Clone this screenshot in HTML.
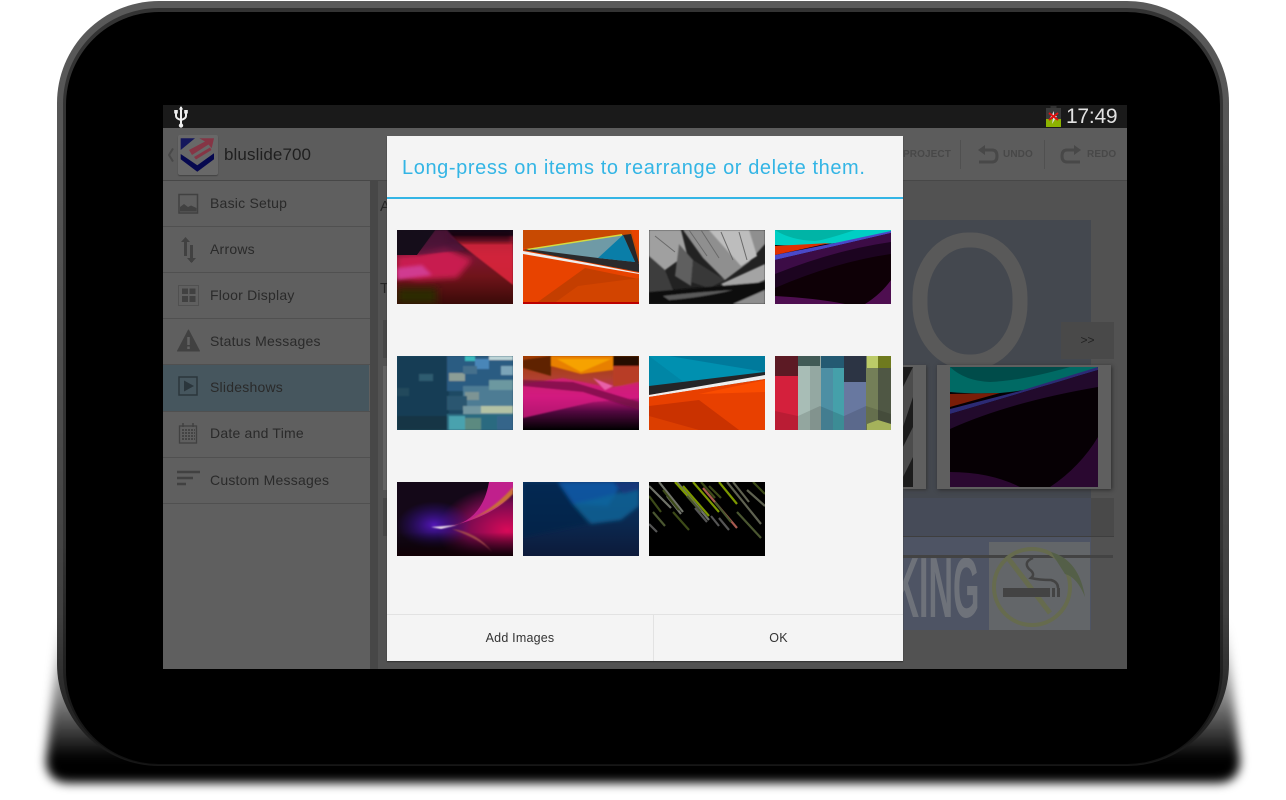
<!DOCTYPE html>
<html><head><meta charset="utf-8"><style>
html,body{margin:0;padding:0;background:#fff;width:1286px;height:800px;overflow:hidden;font-family:"Liberation Sans",sans-serif}
.a{position:absolute}
.m{position:absolute;left:210px;font-size:14px;letter-spacing:.22px;color:#2a2a2a;line-height:18px;white-space:nowrap}
.s{position:absolute;left:163px;width:207px;height:1px;background:#505050}
.ab{position:absolute;font-size:10px;font-weight:bold;color:#484848;line-height:12px;letter-spacing:.1px;white-space:nowrap}
.t{position:absolute;width:116px;height:74px;display:block;filter:blur(.35px)}
</style></head><body>
<svg class="a" style="left:0;top:0" width="1286" height="800"><defs><linearGradient id="sh" x1="0" y1="0" x2="0" y2="1"><stop offset="0" stop-color="#000" stop-opacity="0"/><stop offset=".5" stop-color="#000" stop-opacity=".5"/><stop offset=".85" stop-color="#000" stop-opacity="1"/><stop offset="1" stop-color="#000"/></linearGradient><filter id="b5" x="-5%" y="-20%" width="110%" height="140%"><feGaussianBlur stdDeviation="5"/></filter></defs><path d="M60 620 46 760Q46 783 70 783H1216Q1240 783 1240 760L1226 620Z" fill="url(#sh)" filter="url(#b5)"/></svg>
<div class="a" style="left:57px;top:1px;width:1172px;height:765px;border-radius:102px;background:linear-gradient(#5a5a5a 0,#505050 40%,#404040 80%,#161616 100%)"></div>
<div class="a" style="left:63px;top:8px;width:1160px;height:757px;border-radius:96px;background:linear-gradient(#333 0,#333 70%,#111 100%)"></div>
<div class="a" style="left:66px;top:12px;width:1154px;height:752px;border-radius:93px;background:#000"></div>

<div class="a" style="left:163px;top:105px;width:964px;height:23px;background:#1a1a1a"></div>
<div class="a" style="left:163px;top:128px;width:964px;height:53px;background:#5c5c5c;border-bottom:1px solid #474747;box-sizing:border-box"></div>
<div class="a" style="left:163px;top:181px;width:207px;height:488px;background:#5f5f5f"></div>
<div class="a" style="left:370px;top:181px;width:8px;height:488px;background:#474747"></div>
<div class="a" style="left:378px;top:181px;width:749px;height:488px;background:#525252"></div>

<!-- status -->
<svg class="a" style="left:174px;top:106px" width="14" height="22" viewBox="0 0 14 22" fill="none" stroke="#eee" stroke-width="2"><path d="M7 1V20"/><path d="M7 0 4.800 3.500H9.200Z" fill="#eee" stroke="none"/><path d="M2 6V10Q2 12.500 7 14Q12 12.500 12 10V6"/><rect x="0.200" y="4" width="3.600" height="3.500" fill="#eee" stroke="none"/><rect x="10.200" y="4" width="3.600" height="3.500" fill="#eee" stroke="none"/><circle cx="7" cy="19.500" r="2.200" fill="#eee" stroke="none"/></svg>
<svg class="a" style="left:1046px;top:106px" width="15" height="21" viewBox="0 0 15 21"><rect x="4.500" y="0" width="6" height="3" fill="#333"/><rect x="0" y="2" width="15" height="19" fill="#3a3a3a"/><rect x="0" y="13" width="15" height="8" fill="#8db300"/><path d="M8 5 4 12H7L6 18 11 10H8Z" fill="#ddd"/><path d="M3 7 12 14M12 7 3 14" stroke="#e01010" stroke-width="2"/></svg>
<div class="a" style="left:1066px;top:104px;font-size:21px;line-height:25px;color:#e2e2e2;white-space:nowrap;letter-spacing:-.25px">17:49</div>

<!-- action bar -->
<svg class="a" style="left:166px;top:147px" width="9" height="16" viewBox="0 0 9 16" fill="none" stroke="#484848" stroke-width="2"><path d="M7 1.500 3 8 7 14.500"/></svg>
<div class="a" style="left:178px;top:135px;width:40px;height:40px;background:#686868;border-radius:2px;box-shadow:0 1px 1px #424242"></div>
<svg class="a" style="left:180px;top:137px" width="36" height="36" viewBox="0 0 36 36"><path d="M.7 1.300H15L.7 13Z" fill="#15175c"/><path d="M.7 17 17.300 28.300 34 16.300V22.300L17.300 34.700 .7 22.300Z" fill="#06084f"/><path d="M19.300 1.300H34L31.700 11.300 28.500 7.500 12 18 9 13 25 4.500Z" fill="#853545"/><path d="M14 20 30 10.500 31.500 13 16 22.500Z" fill="#853545"/></svg>
<div class="a" style="left:224px;top:145px;font-size:17px;line-height:20px;color:#1f1f1f;letter-spacing:.1px;white-space:nowrap">bluslide700</div>
<div class="ab" style="left:903px;top:149px">PROJECT</div>
<div class="ab" style="left:1003px;top:149px">UNDO</div>
<div class="ab" style="left:1087px;top:149px">REDO</div>
<div class="a" style="left:960px;top:140px;width:1px;height:29px;background:#505050"></div>
<div class="a" style="left:1044px;top:140px;width:1px;height:29px;background:#505050"></div>
<svg class="a" style="left:977px;top:145px" width="22" height="20" viewBox="0 0 22 20" fill="none" stroke="#484848" stroke-width="3"><path d="M6 5H15Q20 5 20 11T15 17H2"/><path d="M1 5 8 0V10Z" fill="#484848" stroke="none"/></svg>
<svg class="a" style="left:1060px;top:145px" width="22" height="20" viewBox="0 0 22 20" fill="none" stroke="#484848" stroke-width="3"><path d="M16 5H7Q2 5 2 11T7 17H20"/><path d="M21 5 14 0V10Z" fill="#484848" stroke="none"/></svg>

<!-- menu -->
<div class="a" style="left:163px;top:365px;width:206px;height:46px;background:#46565e"></div>
<div class="s" style="top:226px"></div><div class="s" style="top:272px"></div><div class="s" style="top:318px"></div><div class="s" style="top:364px"></div><div class="s" style="top:411px"></div><div class="s" style="top:457px"></div><div class="s" style="top:503px"></div>
<div class="m" style="top:194px">Basic Setup</div>
<div class="m" style="top:240px">Arrows</div>
<div class="m" style="top:286px">Floor Display</div>
<div class="m" style="top:332px">Status Messages</div>
<div class="m" style="top:378px">Slideshows</div>
<div class="m" style="top:424px">Date and Time</div>
<div class="m" style="top:471px">Custom Messages</div>
<svg class="a" style="left:176px;top:192px" width="26" height="300" viewBox="0 0 26 300" fill="none" stroke="#414141">
<rect x="3" y="2.500" width="18.500" height="18.500" stroke-width="1.500"/><path d="M4 19V15L8 12 12 15 15 13.500 20.500 16V19.500H4Z" fill="#414141" stroke="none"/>
<path d="M9.500 48V64M15.500 53V70" stroke-width="3"/><path d="M5 50 9.500 45 14 50ZM11 66H20L15.500 71Z" fill="#414141" stroke="none"/>
<rect x="2.500" y="93.500" width="20" height="20" stroke-dasharray="1 1"/><path d="M6 96.500H12V102H6ZM13.500 96.500H19.500V102H13.500ZM6 104H12V110H6ZM13.500 104H19.500V110H13.500Z" fill="#414141" stroke="none"/>
<path d="M12.500 138 1.500 159H23.500Z" fill="#414141" stroke="#414141" stroke-linejoin="round"/><path d="M12.500 145V153M12.500 154.500V157" stroke="#626262" stroke-width="2.500"/>
<rect x="3" y="185" width="18" height="18" stroke-width="1.500" stroke="#2b363c"/><path d="M8 188.500 18 194 8 199.500Z" fill="#2b363c" stroke="none"/>
<rect x="3.500" y="234" width="17" height="17" stroke-width="1.300"/><path d="M7 231V235M17 231V235" stroke-width="1.500"/><path d="M6 238H19M6 241H19M6 244H19M6 247H19" stroke-width="1.800" stroke-dasharray="2 1"/>
<path d="M1 280H24M1 286H17M1 292H10" stroke-width="2.500"/>
</svg>

<!-- background content -->
<div class="a" style="left:380px;top:198px;font-size:15px;color:#262626;line-height:18px">A</div>
<div class="a" style="left:380px;top:280px;font-size:15px;color:#262626;line-height:18px">T</div>
<div class="a" style="left:383px;top:320px;width:4px;height:38px;background:#474747"></div>
<div class="a" style="left:383px;top:366px;width:4px;height:124px;background:#636363"></div>
<div class="a" style="left:383px;top:498px;width:4px;height:38px;background:#474747"></div>
<div class="a" style="left:903px;top:220px;width:188px;height:410px;background:#44484f"></div>
<div class="a" style="left:903px;top:536px;width:188px;height:94px;background:#4e5464"></div>
<svg class="a" style="left:903px;top:220px" width="140" height="150" fill="none"><rect x="17" y="20" width="100" height="122" rx="48" ry="58" stroke="#595959" stroke-width="15"/></svg>
<div class="a" style="left:1061px;top:322px;width:53px;height:37px;background:#494949;text-align:center;line-height:36px;font-size:12px;color:#222">&gt;&gt;</div>
<div class="a" style="left:903px;top:365px;width:23px;height:124px;background:#5f5f5f;box-shadow:1px 1px 3px #363636"></div>
<svg class="a" style="left:903px;top:367px" width="10" height="120" viewBox="0 0 10 120"><rect width="10" height="120" fill="#1c1c1c"/><path d="M0 20 10 0V30L0 60ZM0 80 10 60V90L0 110Z" fill="#4c4c4c"/></svg>
<div class="a" style="left:937px;top:365px;width:174px;height:124px;background:#5f5f5f;box-shadow:1px 1px 4px #2c2c2c"></div>
<svg class="a" style="left:950px;top:367px" width="148" height="120" viewBox="0 0 148 120"><rect width="148" height="120" fill="#060004"/><path d="M0 0H148Q100 22 50 26 20 27 0 25Z" fill="#006a64"/><path d="M0 0H120Q70 14 40 15 15 14 0 0Z" fill="#004c4a"/><path d="M0 27 50 26 0 40Z" fill="#7a1d08"/><path d="M0 42 70 24 148 0V3L0 47Z" fill="#2c2a74"/><path d="M0 47 148 3V20Q60 35 0 62Z" fill="#220a2c"/><path d="M0 105Q40 105 70 120H0ZM100 120Q130 100 148 70V120Z" fill="#2a0830"/></svg>
<div class="a" style="left:903px;top:498px;width:211px;height:38px;background:#464b58;box-shadow:0 1px 0 #3e3e3e"></div>
<div class="a" style="left:1091px;top:498px;width:23px;height:38px;background:#494949"></div>
<div class="a" style="left:989px;top:542px;width:101px;height:88px;background:#636669"></div>
<div class="a" style="left:767px;top:546px;font-size:85px;line-height:85px;color:#6e727a;transform:scaleX(.4);transform-origin:100% 0;white-space:nowrap;font-weight:bold">KING</div>
<div class="a" style="left:903px;top:555px;width:210px;height:3px;background:#434343"></div>
<svg class="a" style="left:989px;top:542px" width="101" height="90" viewBox="0 0 101 90" fill="none"><circle cx="43" cy="45" r="38" stroke="#666b4e" stroke-width="4"/><path d="M19 16 61 71" stroke="#666b4e" stroke-width="5"/><path d="M62 10Q90 18 96 55 88 35 76 32Z" fill="#545f48"/><path d="M14 46H61V55H14Z" fill="#434343"/><path d="M63 46H66V55H63ZM68 46H71V55H68Z" fill="#434343"/><path d="M44 16Q34 20 40 27 47 32 42 36 50 38 62 38 69 40 69 46" stroke="#434343" stroke-width="2.500"/></svg>

<!-- dialog -->
<div class="a" style="left:387px;top:136px;width:516px;height:525px;background:#f4f4f4;box-shadow:0 1px 1px #333"></div>
<div class="a" style="left:402px;top:155.500px;font-size:20px;line-height:24px;color:#33b5e5;white-space:nowrap;letter-spacing:.6px">Long-press on items to rearrange or delete them.</div>
<div class="a" style="left:387px;top:197px;width:516px;height:1.500px;background:#33b5e5"></div>
<div class="a" style="left:387px;top:614px;width:516px;height:1px;background:#e2e2e2"></div>
<div class="a" style="left:653px;top:614px;width:1px;height:47px;background:#e2e2e2"></div>
<div class="a" style="left:387px;top:629px;width:266px;text-align:center;font-size:12.500px;line-height:18px;color:#333;letter-spacing:.2px">Add Images</div>
<div class="a" style="left:654px;top:629px;width:249px;text-align:center;font-size:12.500px;line-height:18px;color:#333;letter-spacing:.2px">OK</div>

<svg width="0" height="0" style="position:absolute"><defs>
<filter id="f3" x="-20%" y="-20%" width="140%" height="140%"><feGaussianBlur stdDeviation="3"/></filter><filter id="f2" x="-20%" y="-20%" width="140%" height="140%"><feGaussianBlur stdDeviation="1.800"/></filter><filter id="f4" x="-30%" y="-30%" width="160%" height="160%"><feGaussianBlur stdDeviation="4"/></filter><filter id="f1" x="-10%" y="-10%" width="120%" height="120%"><feGaussianBlur stdDeviation=".8"/></filter>
<linearGradient id="g1" x1="0" y1="0" x2="0" y2="1"><stop offset="0" stop-color="#140c16"/><stop offset=".2" stop-color="#301024"/><stop offset=".36" stop-color="#7a1530"/><stop offset=".62" stop-color="#70141a"/><stop offset="1" stop-color="#3a0a08"/></linearGradient>
<linearGradient id="g6" x1="0" y1="0" x2="0" y2="1"><stop offset="0" stop-color="#a03c00"/><stop offset=".3" stop-color="#b04030"/><stop offset=".55" stop-color="#c8187c"/><stop offset=".75" stop-color="#520840"/><stop offset="1" stop-color="#000"/></linearGradient>
<linearGradient id="g10" x1="0" y1="0" x2="0" y2="1"><stop offset="0" stop-color="#0a3568"/><stop offset=".5" stop-color="#0a2a52"/><stop offset="1" stop-color="#0d1a3a"/></linearGradient>
<radialGradient id="g9a" cx=".95" cy=".65" r=".6"><stop offset="0" stop-color="#d80a58"/><stop offset=".6" stop-color="#7a0a50"/><stop offset="1" stop-color="#140818"/></radialGradient>
<radialGradient id="g9b" cx=".32" cy=".58" r=".32"><stop offset="0" stop-color="#5a18c8" stop-opacity=".9"/><stop offset="1" stop-color="#3010a0" stop-opacity="0"/></radialGradient>
<linearGradient id="g9c" x1="0" y1="0" x2="0" y2="1"><stop offset="0" stop-color="#000" stop-opacity="0"/><stop offset=".68" stop-color="#000" stop-opacity="0"/><stop offset="1" stop-color="#120006"/></linearGradient>
</defs></svg>

<svg class="t" style="left:397px;top:230px" viewBox="0 0 116 74"><rect width="116" height="74" fill="url(#g1)"/><rect y="58" width="40" height="16" fill="#2c2a06" filter="url(#f4)"/><path d="M0 26 24 24 48 18 75 30 60 48 20 50 0 46Z" fill="#c81c50" filter="url(#f3)"/><path d="M0 38 25 35 35 45 0 50Z" fill="#d03a90" filter="url(#f2)"/><path d="M53 6H116V55Z" fill="#e0283c" opacity=".85" filter="url(#f1)"/><rect x="50" width="66" height="12" fill="#18060c" opacity=".8" filter="url(#f3)"/><path d="M20 25 38 0H50L68 20Z" fill="#5a1540" opacity=".7" filter="url(#f1)"/><path d="M0 0H38L20 25H0Z" fill="#150d1a"/></svg>

<svg class="t" style="left:523px;top:230px" viewBox="0 0 116 74"><rect width="116" height="74" fill="#e84300"/><path d="M0 0H116V30L0 18Z" fill="#c84a02"/><path d="M108 0H116V25Z" fill="#e84300"/><path d="M0 20 116 42V34L100 6Z" fill="#2a2a2c"/><path d="M4 19 100 5 112 32 75 28Z" fill="#6f9aa6"/><path d="M75 28 100 5 112 32Z" fill="#0a7ea8"/><path d="M100 5 108 4 116 33 113 32Z" fill="#262628"/><path d="M3 19 99 4V5.500L6 20Z" fill="#d5dc40"/><path d="M0 21 65 33 116 43V44L0 24Z" fill="#eee"/><path d="M12 74 62 38 116 49V74Z" fill="#c43e00"/><path d="M55 56 116 48V74H30Z" fill="#d24400"/><rect y="72" width="116" height="2" fill="#b00"/></svg>

<svg class="t" style="left:649px;top:230px" viewBox="0 0 116 74"><rect width="116" height="74" fill="#222"/><g filter="url(#f1)"><path d="M0 0H32L38 24 16 40 0 26Z" fill="#a0a0a0"/><path d="M0 26 16 40 24 60 0 62Z" fill="#3c3c3c"/><path d="M34 0H116V14L100 32 76 50 54 28Z" fill="#8f8f8f"/><path d="M60 0H100L108 26 92 36Z" fill="#bdbdbd"/><path d="M30 14 44 30 42 56 26 46Z" fill="#5e5e5e"/><path d="M44 30 76 50 60 58 42 52Z" fill="#383838"/><path d="M72 54 116 34V50L84 62Z" fill="#a4a4a4"/><path d="M0 62 116 52V74H0Z" fill="#0e0e0e"/><path d="M14 66Q50 62 84 60 50 68 20 70Z" fill="#5a5a5a"/><path d="M84 74 116 60V74Z" fill="#8e8e8e"/></g><path d="M40 0 58 26M52 0 70 28M72 2 84 30M6 6 26 22M90 2 98 30" stroke="#6a6a6a" stroke-width="1" fill="none"/></svg>

<svg class="t" style="left:775px;top:230px" viewBox="0 0 116 74"><rect width="116" height="74" fill="#0e0006"/><path d="M0 0H116V2Q80 12 50 14 20 16 0 15Z" fill="#00cfc4"/><path d="M0 0H80Q50 10 40 11 15 10 0 0Z" fill="#00b4a6"/><path d="M0 16 55 13 0 25Z" fill="#e03000"/><path d="M0 25 60 13 116 1V3L0 30Z" fill="#4a48c8"/><path d="M0 30 116 3V22Q60 28 0 52Z" fill="#3c0c46"/><path d="M0 44Q60 20 116 12V24Q60 32 0 58Z" fill="#1c0420"/><path d="M0 66Q40 68 70 74H0ZM90 74Q106 64 116 50V74Z" fill="#4e0e50"/></svg>

<svg class="t" style="left:397px;top:356px" viewBox="0 0 116 74"><rect width="116" height="74" fill="#1e4a64"/><g filter="url(#f1)"><rect width="52" height="74" fill="#173d54"/><rect x="50" width="66" height="35" fill="#2a5c82"/><rect x="68" width="10" height="5" fill="#3bb9bd"/><rect x="92" width="24" height="4" fill="#bfd6d8"/><rect x="78" y="3" width="14" height="10" fill="#4a86b8"/><rect x="52" y="17" width="16" height="8" fill="#8c9e96"/><rect x="22" y="18" width="14" height="7" fill="#2f5c70"/><rect x="104" y="10" width="12" height="9" fill="#7ba4b8"/><rect x="66" y="10" width="14" height="8" fill="#44708c"/><rect x="66" y="30" width="50" height="20" fill="#4d7c94"/><rect x="92" y="24" width="24" height="10" fill="#6c98a0"/><rect x="68" y="36" width="14" height="8" fill="#7d9494"/><rect x="50" y="40" width="20" height="14" fill="#2a566f"/><rect x="0" y="32" width="12" height="8" fill="#244a5c"/><rect x="66" y="50" width="50" height="8" fill="#7397a0"/><rect x="84" y="50" width="32" height="7" fill="#b4c2a4"/><rect x="50" y="58" width="66" height="16" fill="#2a6a80"/><rect x="52" y="60" width="16" height="14" fill="#4aa2ae"/><rect x="68" y="62" width="16" height="12" fill="#5c8a80"/><rect x="100" y="60" width="16" height="14" fill="#36658a"/><rect x="0" y="60" width="50" height="14" fill="#143544"/></g></svg>

<svg class="t" style="left:523px;top:356px" viewBox="0 0 116 74"><rect width="116" height="74" fill="url(#g6)"/><g filter="url(#f1)"><path d="M28 0H90V14L58 18 28 10Z" fill="#e88000"/><path d="M34 3 88 3 58 16Z" fill="#f6a200"/><path d="M0 4 28 0V20L0 12Z" fill="#5e2400"/><path d="M90 0H116V10H90Z" fill="#260a06"/><path d="M90 10H116V30H90Z" fill="#b83c26"/><path d="M0 28 40 22 88 32 116 26V42L70 46 0 62Z" fill="#d41a80" opacity=".8"/><path d="M0 30 60 36 116 54V46L50 26 0 24Z" fill="#6d0a40" opacity=".7"/><path d="M70 22 90 30 82 34Z" fill="#e860a8"/></g></svg>

<svg class="t" style="left:649px;top:356px" viewBox="0 0 116 74"><rect width="116" height="74" fill="#e64000"/><rect width="116" height="30" fill="#0090b0"/><path d="M20 0H116V16Z" fill="#007a9c"/><path d="M0 0 40 30H0Z" fill="#0086a6"/><path d="M0 30 116 16V20L0 39Z" fill="#252527"/><path d="M0 39 116 19V23L0 41Z" fill="#eee"/><path d="M0 41 116 23V74H0Z" fill="#e84000"/><path d="M50 38 116 24V36Z" fill="#fa4c00"/><path d="M0 50 50 44 90 74H0Z" fill="#ca3200"/><path d="M0 60 50 74H0Z" fill="#dc3e00"/></svg>

<svg class="t" style="left:775px;top:356px" viewBox="0 0 116 74"><rect width="23" height="74" fill="#d4203c"/><rect width="23" height="20" fill="#5c1a24"/><rect x="23" width="22" height="74" fill="#a8bdb6"/><rect x="35" width="11" height="74" fill="#94a8a2"/><rect x="23" width="22" height="10" fill="#415a56"/><rect x="46" width="23" height="74" fill="#4d8fa4"/><rect x="58" width="11" height="74" fill="#45a0aa"/><rect x="46" width="23" height="12" fill="#245a72"/><rect x="69" width="22" height="74" fill="#6878a0"/><rect x="69" width="22" height="26" fill="#2c3444"/><rect x="91" width="25" height="74" fill="#747f58"/><rect x="103" width="13" height="74" fill="#4f5744"/><rect x="92" width="24" height="12" fill="#bccb68"/><rect x="103" width="13" height="12" fill="#6f7a1e"/><path d="M92 68 103 64 116 68V74H92Z" fill="#bccb68"/><path d="M0 55 23 60 45 50 69 60 91 50 116 58V74H0Z" fill="#000" opacity=".12"/></svg>

<svg class="t" style="left:397px;top:482px" viewBox="0 0 116 74"><rect width="116" height="74" fill="url(#g9a)"/><rect width="116" height="74" fill="url(#g9b)"/><rect width="116" height="74" fill="url(#g9c)"/><path d="M50 45Q85 40 92 0H116V8Q105 32 50 45Z" fill="#c0208c"/><path d="M52 45Q90 35 116 5V12Q100 30 52 45Z" fill="#c87038" filter="url(#f1)"/><path d="M34 45 60 43 44 47Z" fill="#e8d8e8" filter="url(#f1)"/><path d="M55 47Q80 50 95 70 85 58 55 47Z" fill="#a04a48" filter="url(#f1)"/></svg>

<svg class="t" style="left:523px;top:482px" viewBox="0 0 116 74"><rect width="116" height="74" fill="url(#g10)"/><g filter="url(#f2)"><path d="M0 0H40L65 42 0 55Z" fill="#08254a" opacity=".7"/><path d="M35 0H100L85 24 50 22Z" fill="#0e5aa8" opacity=".85"/><path d="M50 22 116 6V24L98 38 68 42Z" fill="#13679a" opacity=".8"/><path d="M90 0H116V8L100 12Z" fill="#15397a"/></g></svg>

<svg class="t" style="left:649px;top:482px" viewBox="0 0 116 74"><rect width="116" height="74" fill="#000"/><g fill="none" stroke-width="2.200"><path d="M0 4 22 26M10 0 34 30M28 0 60 38M18 14 32 32" stroke="#70736a"/><path d="M34 4 60 34M44 0 70 30M70 0 88 22M26 0 44 20" stroke="#7c9800"/><path d="M54 6 88 46" stroke="#a85a50"/><path d="M78 0 112 42M98 8 116 24M84 0 100 20" stroke="#5e6150"/><path d="M4 30 16 44M66 20 82 40M88 30 112 56M38 14 52 30" stroke="#4a5630"/><path d="M14 8 30 28M60 4 72 16M104 0 116 12M24 30 40 48M52 0 66 16M0 14 12 30" stroke="#3c4a18"/><path d="M62 34 70 44M0 42 8 50M46 26 58 40M70 36 80 48" stroke="#555"/></g></svg>
</body></html>
